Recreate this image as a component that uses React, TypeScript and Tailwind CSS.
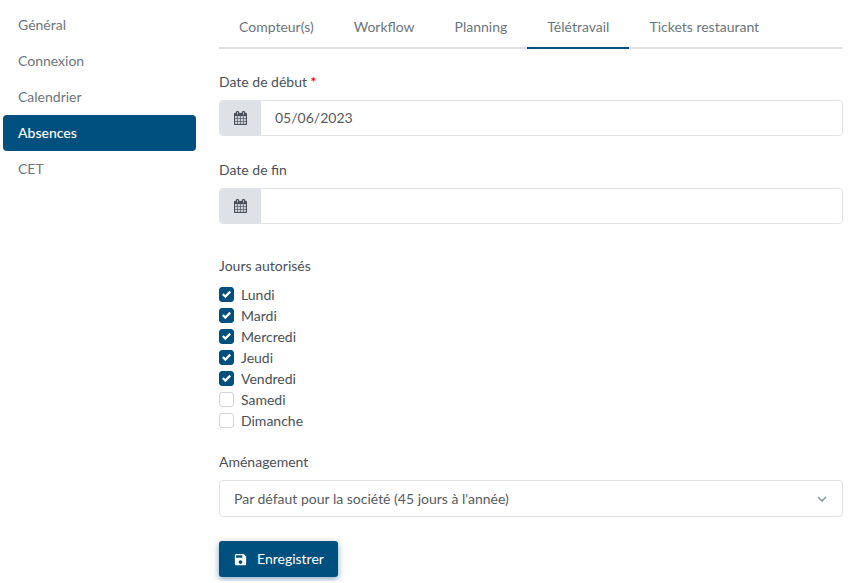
import React, { useState } from 'react';
import { MdSave } from 'react-icons/md';

const sections = ['Général', 'Connexion', 'Calendrier', 'Absences', 'CET'];
const tabs = ['Compteur(s)', 'Workflow', 'Planning', 'Télétravail', 'Tickets restaurant'];
const days = ['Lundi', 'Mardi', 'Mercredi', 'Jeudi', 'Vendredi', 'Samedi', 'Dimanche'];

const CalendarIcon: React.FC = () => (
  <svg viewBox="0 0 1664 1792" className="h-[14px] w-[13px]" fill="currentColor" stroke="currentColor" strokeWidth="30" aria-hidden="true">
    <path d="M128 1664h288v-288h-288v288zM480 1664h320v-288h-320v288zM128 1312h288v-320h-288v320zM480 1312h320v-320h-320v320zM128 928h288v-288h-288v288zM864 1664h320v-288h-320v288zM480 928h320v-288h-320v288zM1248 1664h288v-288h-288v288zM864 1312h320v-320h-320v320zM512 448v-288q0-13-9.5-22.5t-22.5-9.5h-64q-13 0-22.5 9.5t-9.5 22.5v288q0 13 9.5 22.5t22.5 9.5h64q13 0 22.5-9.5t9.5-22.5zM1248 1312h288v-320h-288v320zM864 928h320v-288h-320v288zM1248 928h288v-288h-288v288zM1280 448v-288q0-13-9.5-22.5t-22.5-9.5h-64q-13 0-22.5 9.5t-9.5 22.5v288q0 13 9.5 22.5t22.5 9.5h64q13 0 22.5-9.5t9.5-22.5zM1664 384v1280q0 52-38 90t-90 38h-1408q-52 0-90-38t-38-90v-1280q0-52 38-90t90-38h128v-96q0-66 47-113t113-47h64q66 0 113 47t47 113v96h384v-96q0-66 47-113t113-47h64q66 0 113 47t47 113v96h128q52 0 90 38t38 90z" />
  </svg>
);

interface DateFieldProps {
  id: string;
  label: string;
  required?: boolean;
  value: string;
  onChange: (value: string) => void;
}

const DateField: React.FC<DateFieldProps> = ({ id, label, required, value, onChange }) => (
  <div>
    <label htmlFor={id} className="mb-2 block">
      {label}
      {required && <span className="font-bold text-[#ff0000]"> *</span>}
    </label>
    <div className="flex h-9 overflow-hidden rounded border border-[#dee2e6]">
      <span className="flex w-[41px] items-center justify-center bg-[#dee2e6]">
        <CalendarIcon />
      </span>
      <input
        id={id}
        type="text"
        value={value}
        onChange={(e) => onChange(e.target.value)}
        className="min-w-0 flex-1 bg-white px-[14px] text-[#555b61] outline-none"
      />
    </div>
  </div>
);

export default function App() {
  const [section, setSection] = useState('Absences');
  const [tab, setTab] = useState('Télétravail');
  const [start, setStart] = useState('05/06/2023');
  const [end, setEnd] = useState('');
  const [allowed, setAllowed] = useState(days.slice(0, 5));

  const toggleDay = (day: string) => {
    setAllowed(allowed.includes(day) ? allowed.filter((d) => d !== day) : [...allowed, day]);
  };

  return (
    <div className="flex gap-[23px] bg-white pl-[3px] pr-[7px] pt-[7px] font-['Lato',sans-serif] text-[14px] leading-5 text-[#495057]">
      <nav className="flex w-[193px] shrink-0 flex-col">
        {sections.map((name) => (
          <button
            key={name}
            type="button"
            onClick={() => setSection(name)}
            className={`h-9 rounded px-[15px] text-left ${
              name === section ? 'bg-[#00507f] font-medium text-white' : 'text-[#6c757d]'
            }`}
          >
            {name}
          </button>
        ))}
      </nav>

      <main className="min-w-0 flex-1">
        <div role="tablist" className="flex border-b-2 border-[#dee2e6] text-[#6c757d]">
          {tabs.map((name) => (
            <button
              key={name}
              type="button"
              role="tab"
              aria-selected={name === tab}
              onClick={() => setTab(name)}
              className={`-mb-[2px] h-[42px] whitespace-nowrap border-b-2 px-5 ${
                name === tab ? 'border-[#00507f]' : 'border-transparent'
              }`}
            >
              {name}
            </button>
          ))}
        </div>

        <form className="pt-[23px]" onSubmit={(e) => e.preventDefault()}>
          <div className="flex flex-col gap-6">
            <DateField id="start" label="Date de début" required value={start} onChange={setStart} />
            <DateField id="end" label="Date de fin" value={end} onChange={setEnd} />
          </div>

          <fieldset className="mt-8">
            <legend className="mb-2">Jours autorisés</legend>
            {days.map((day) => (
              <label key={day} className="flex h-[21px] items-center gap-[7px]">
                <span className="relative flex size-[15px]">
                  <input
                    type="checkbox"
                    checked={allowed.includes(day)}
                    onChange={() => toggleDay(day)}
                    className="size-[15px] appearance-none rounded-[3px] border border-[#ced4da] bg-white checked:border-[#00507f] checked:bg-[#00507f]"
                  />
                  {allowed.includes(day) && (
                    <svg viewBox="0 0 8 8" className="pointer-events-none absolute left-[3px] top-[3px] size-[9px]" fill="#fff" aria-hidden="true">
                      <path d="M6.564.75l-3.59 3.612-1.538-1.55L0 4.26l2.974 2.99L8 2.193z" />
                    </svg>
                  )}
                </span>
                {day}
              </label>
            ))}
          </fieldset>

          <div className="mt-[21px]">
            <label htmlFor="arrangement" className="mb-2 block">Aménagement</label>
            <div className="relative">
              <select
                id="arrangement"
                className="h-[37px] w-full appearance-none rounded border border-[#dee2e6] bg-white px-[14px] pr-10 text-[#555b61] outline-none"
              >
                <option>Par défaut pour la société (45 jours à l'année)</option>
              </select>
              <svg viewBox="0 0 10 6" className="pointer-events-none absolute right-4 top-4 h-[6px] w-[10px]" fill="none" stroke="#8b98a0" strokeWidth="1.6" aria-hidden="true">
                <path d="M1 1l4 4 4-4" />
              </svg>
            </div>
          </div>

          <button
            type="submit"
            className="mt-6 mb-1 flex h-9 items-center gap-[9px] rounded-[3px] bg-[#00507f] px-[14px] text-white shadow-[0_2px_6px_0_rgba(0,80,127,0.5)]"
          >
            <MdSave size={15} aria-hidden="true" />
            Enregistrer
          </button>
        </form>
      </main>
    </div>
  );
}
